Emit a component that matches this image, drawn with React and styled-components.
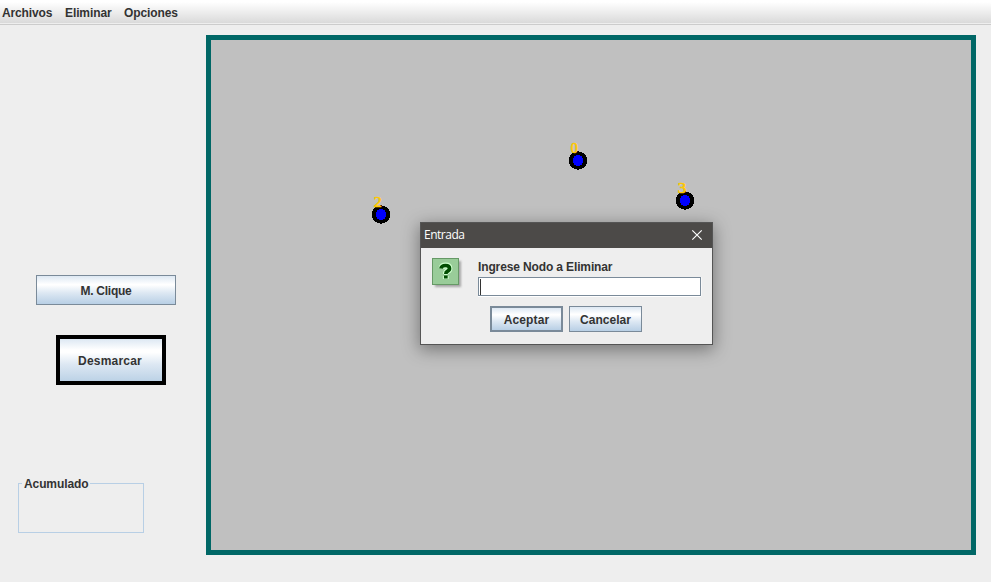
import React from "react";
import styled, { createGlobalStyle } from "styled-components";

const GlobalStyle = createGlobalStyle`
  * { box-sizing: border-box; }
  body {
    margin: 0;
    background: #eeeeee;
    color: #333333;
    font: bold 12px/14px "Liberation Sans", Arial, sans-serif;
    overflow: hidden;
  }
`;

const Window = styled.div`
  width: 991px;
  height: 582px;
  display: flex;
  flex-direction: column;
  background: #eeeeee;
`;

const MenuBar = styled.nav`
  height: 25px;
  flex: none;
  display: flex;
  padding: 6px 2px 0;
  background: linear-gradient(#ffffff 0, #ffffff 2px, #dadada 23px, #eeeeee 23px);
  border-bottom: 1px solid #cccccc;
`;

const MenuItem = styled.span`
  width: ${(p) => p.$width}px;
  flex: none;
  white-space: nowrap;
  letter-spacing: ${(p) => p.$spacing || 0}px;
`;

const Body = styled.main`
  flex: 1;
  display: flex;
  align-items: flex-start;
`;

const Sidebar = styled.aside`
  width: 206px;
  flex: none;
  display: flex;
  flex-direction: column;
  align-items: flex-start;
  padding-top: 250px;
`;

const metalFill = "linear-gradient(#dde8f3 0%, #ffffff 30%, #ffffff 32%, #dde8f3 60%, #b8cfe5 100%)";

const Button = styled.button`
  width: ${(p) => p.$width}px;
  height: ${(p) => p.$height}px;
  margin: 0;
  padding: 2px 0 0;
  border: ${(p) => p.$border || 1}px solid ${(p) => p.$edge || "#7a8a99"};
  background: ${metalFill} padding-box;
  color: #333333;
  font: inherit;
  letter-spacing: ${(p) => p.$spacing || 0}px;
`;

const CliqueButton = styled(Button)`
  margin-left: 36px;
`;

const UnmarkButton = styled(Button)`
  margin: 30px 0 0 56px;
  padding-right: 2px;
  background: linear-gradient(#dde8f3 0%, #ffffff 26%, #ffffff 32%, #dde8f3 60%, #bcd2e6 100%) padding-box;
`;

const TotalGroup = styled.fieldset`
  width: 126px;
  height: 57px;
  margin: 91px 0 0 18px;
  padding: 0;
  border: 1px solid #b8cfe5;
`;

const GroupTitle = styled.legend`
  margin-left: 3px;
  padding: 1px 2px 0;
  height: 14px;
  letter-spacing: -0.1px;
`;

const Canvas = styled.section`
  position: relative;
  width: 770px;
  height: 520px;
  margin-top: 10px;
  flex: none;
  border: 5px solid #006766;
  background: #c0c0c0;
`;

const Graph = styled.svg`
  display: block;
  font: 14px "Liberation Serif", serif;
`;

const Dialog = styled.div`
  position: absolute;
  left: 209px;
  top: 182px;
  width: 293px;
  height: 123px;
  border: 1px solid #555555;
  background: #eeeeee;
  box-shadow: 0 4px 16px 1px rgba(0, 0, 0, 0.38);
`;

const TitleBar = styled.header`
  height: 25px;
  display: flex;
  align-items: center;
  justify-content: space-between;
  padding: 0 9px 2px 3px;
  background: #4c4a48;
  color: #ffffff;
  font: 12px/16px "Open Sans", "Noto Sans", sans-serif;
  letter-spacing: -0.5px;
`;

const DialogBody = styled.div`
  display: flex;
  padding: 10px 11px 0;
`;

const Form = styled.div`
  width: 223px;
  margin-left: 14px;
  padding-top: 2px;
`;

const Prompt = styled.label`
  display: block;
  height: 17px;
  white-space: nowrap;
  letter-spacing: -0.13px;
`;

const Field = styled.div`
  height: 19px;
  padding: 1px 0 0 1px;
  border: 1px solid #7a8a99;
  background: #ffffff;
  box-shadow: 0 1px 0 #ffffff, 1px 0 0 #f8f8f8;
`;

const Caret = styled.div`
  width: 1px;
  height: 16px;
  background: #333333;
`;

const Actions = styled.div`
  display: flex;
  gap: 6px;
  margin: 10px 0 0 12px;
`;

const QuestionIcon = () => (
  <svg width="32" height="32" viewBox="0 0 32 32">
    <defs>
      <filter id="soft" x="-20%" y="-20%" width="140%" height="140%">
        <feGaussianBlur stdDeviation="1.2" />
      </filter>
    </defs>
    <rect x="3" y="3" width="26" height="26" fill="#8c8c8c" opacity=".75" filter="url(#soft)" />
    <rect x=".5" y=".5" width="26" height="26" fill="#99cc99" stroke="#669966" />
    <g fill="none" strokeLinejoin="round">
      <path d="M9.5 10.5Q10 7.5 13.5 7.5Q17.5 7.5 17.5 10.5Q17.5 12.3 15.5 13.2Q13.8 14 13.8 16M13.8 18V20.9" stroke="#ccffcc" strokeWidth="5.8" />
      <path d="M9 10.5Q9.5 7.5 13.5 7.5Q17.5 7.5 17.5 10.5Q17.5 12.3 15.5 13.2Q13.8 14 13.8 16M13.8 17.6V20.4" stroke="#004d00" strokeWidth="3.7" />
    </g>
    <path d="M12 16.5H15.7" stroke="#ccffcc" />
  </svg>
);

const CloseIcon = () => (
  <svg width="12" height="12" viewBox="0 0 12 12">
    <path d="M1.3 1.3L10.7 10.7M10.7 1.3L1.3 10.7" stroke="#ffffff" strokeWidth="1.15" />
  </svg>
);

const nodes = [
  { id: "0", x: 367, y: 120.5, stretch: 7 },
  { id: "2", x: 170, y: 174.5, stretch: 8 },
  { id: "3", x: 474, y: 160.5, stretch: 8.5 },
];

export default function App() {
  return (
    <>
      <GlobalStyle />
      <Window>
        <MenuBar>
          <MenuItem $width={63} $spacing={-0.15}>Archivos</MenuItem>
          <MenuItem $width={59} $spacing={-0.1}>Eliminar</MenuItem>
          <MenuItem $width={60} $spacing={-0.1}>Opciones</MenuItem>
        </MenuBar>
        <Body>
          <Sidebar>
            <CliqueButton $width={140} $height={30} $spacing={-0.25}>M. Clique</CliqueButton>
            <UnmarkButton $width={110} $height={50} $border={4} $edge="#000000" $spacing={0.2}>
              Desmarcar
            </UnmarkButton>
            <TotalGroup>
              <GroupTitle>Acumulado</GroupTitle>
            </TotalGroup>
          </Sidebar>
          <Canvas>
            <Graph width="760" height="510">
              {nodes.map((n) => (
                <g key={n.id}>
                  <circle cx={n.x} cy={n.y} r="9.2" fill="#000000" shapeRendering="crispEdges" />
                  <circle cx={n.x} cy={n.y} r="5.4" fill="#0000ff" shapeRendering="crispEdges" />
                  <text
                    x={n.x - 7.2}
                    y={Math.ceil(n.y) - 8}
                    textLength={n.stretch}
                    lengthAdjust="spacingAndGlyphs"
                    fill="#ffc800"
                    stroke="#ffc800"
                    strokeWidth="0.6"
                  >
                    {n.id}
                  </text>
                </g>
              ))}
            </Graph>
            <Dialog>
              <TitleBar>
                Entrada
                <CloseIcon />
              </TitleBar>
              <DialogBody>
                <QuestionIcon />
                <Form>
                  <Prompt>Ingrese Nodo a Eliminar</Prompt>
                  <Field><Caret /></Field>
                  <Actions>
                    <Button $width={73} $height={26} $border={2} $spacing={0.1}>Aceptar</Button>
                    <Button $width={73} $height={26} $spacing={0.05}>Cancelar</Button>
                  </Actions>
                </Form>
              </DialogBody>
            </Dialog>
          </Canvas>
        </Body>
      </Window>
    </>
  );
}
